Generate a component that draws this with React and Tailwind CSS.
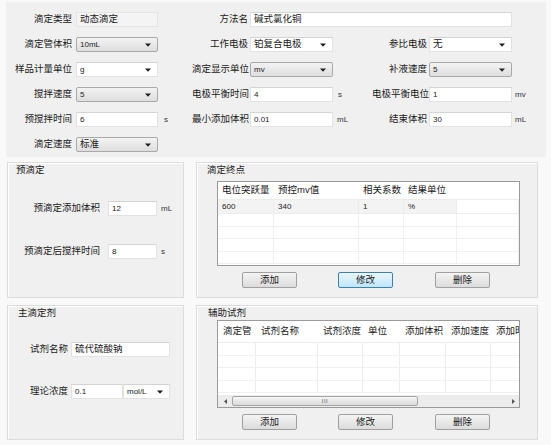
import React from 'react';

const Arrow = () => (
  <svg width="6" height="4" viewBox="0 0 6 4" className="shrink-0">
    <path d="M0 0.5h6L3 3.8z" fill="#1f1f1f" />
  </svg>
);

const TextBox = ({ className, value, cn }) => (
  <div className={`h-[15px] bg-white border border-[#e2e2e2] border-t-[#d4d4d4] flex items-center px-[3px] whitespace-nowrap overflow-hidden ${className}`}>
    <span className={cn ? 'text-[9.5px]' : 'text-[8px] text-[#222]'}>{value}</span>
  </div>
);

const ReadBox = ({ className, value }) => (
  <div className={`h-[15px] bg-[#f4f4f4] border border-[#e4e4e4] flex items-center px-[3px] whitespace-nowrap ${className}`}>
    <span className="text-[9.5px]">{value}</span>
  </div>
);

const Combo = ({ className, value, gray, cn }) => (
  <div
    className={`h-[15px] flex items-center justify-between pl-[3px] pr-[6px] whitespace-nowrap ${
      gray
        ? 'bg-gradient-to-b from-[#f3f3f3] to-[#dedede] border border-[#a9a9a9] rounded-[2px]'
        : 'bg-white border border-[#e2e2e2] border-t-[#d4d4d4]'
    } ${className}`}
  >
    <span className={cn ? 'text-[9.5px]' : 'text-[8px] text-[#222]'}>{value}</span>
    <Arrow />
  </div>
);

const Unit = ({ className, children }) => (
  <div className={`text-[8px] text-[#333] whitespace-nowrap ${className}`}>{children}</div>
);

const Lbl = ({ className, children }) => (
  <div className={`text-[9.5px] text-right whitespace-nowrap ${className}`}>{children}</div>
);

const Btn = ({ children, active, className }) => (
  <div
    className={`w-[55px] h-[16px] flex items-center justify-center text-[9.5px] rounded-[2px] border ${
      active
        ? 'border-[#3c7fb1] bg-gradient-to-b from-[#eaf6fd] to-[#bee6fd]'
        : 'border-[#a0a0a0] bg-gradient-to-b from-[#f4f4f4] to-[#dcdcdc]'
    } ${className}`}
  >
    {children}
  </div>
);

const Group = ({ title, children, titleClass }) => (
  <div className="border border-[#dcdcdc] bg-[#f0f0f0] shadow-[inset_1px_1px_0_#ffffff] flex flex-col">
    <div className={`h-[14px] text-[9.5px] leading-[14px] ${titleClass}`}>{title}</div>
    {children}
  </div>
);

const endpointCols = ['w-[56px]', 'w-[85px]', 'w-[45px]', 'w-[53px]', 'flex-1'];
const endpointHead = ['电位突跃量', '预控mv值', '相关系数', '结果单位', ''];
const endpointRow = ['600', '340', '1', '%', ''];

const reagentCols = ['w-[38px]', 'w-[62px]', 'w-[45px]', 'w-[37px]', 'w-[46px]', 'w-[45px]', 'w-[40px]'];
const reagentHead = ['滴定管', '试剂名称', '试剂浓度', '单位', '添加体积', '添加速度', '添加时间'];

export default function App() {
  return (
    <div className="w-[551px] h-[445px] overflow-hidden bg-[#f9f9f9] pt-[2px] pl-[6px] text-[#1a1a1a] font-['Liberation_Sans','Noto_Sans_CJK_SC',sans-serif]">
      {/* top parameters */}
      <div className="w-[540px] h-[155px] bg-[#f0f0f0] pt-[10px] flex flex-col gap-[10px]">
        <div className="flex items-center h-[15px]">
          <Lbl className="w-[66px]">滴定类型</Lbl>
          <ReadBox className="ml-[4px] w-[82px]" value="动态滴定" />
          <div className="w-[34px]" />
          <Lbl className="w-[56px]">方法名</Lbl>
          <TextBox className="ml-[2px] w-[262px]" value="碱式氯化铜" cn />
        </div>
        <div className="flex items-center h-[15px]">
          <Lbl className="w-[66px]">滴定管体积</Lbl>
          <Combo className="ml-[4px] w-[82px]" value="10mL" gray />
          <div className="w-[34px]" />
          <Lbl className="w-[56px]">工作电极</Lbl>
          <Combo className="ml-[2px] w-[83px]" value="铂复合电极" cn />
          <div className="w-[39px]" />
          <Lbl className="w-[55px]">参比电极</Lbl>
          <Combo className="ml-[2px] w-[83px]" value="无" cn />
        </div>
        <div className="flex items-center h-[15px]">
          <Lbl className="w-[66px]">样品计量单位</Lbl>
          <Combo className="ml-[4px] w-[82px]" value="g" />
          <div className="w-[34px]" />
          <Lbl className="w-[56px]">滴定显示单位</Lbl>
          <Combo className="ml-[2px] w-[83px]" value="mv" gray />
          <div className="w-[39px]" />
          <Lbl className="w-[55px]">补液速度</Lbl>
          <Combo className="ml-[2px] w-[83px]" value="5" gray />
        </div>
        <div className="flex items-center h-[15px]">
          <Lbl className="w-[66px]">搅拌速度</Lbl>
          <Combo className="ml-[4px] w-[82px]" value="5" gray />
          <div className="w-[34px]" />
          <Lbl className="w-[56px]">电极平衡时间</Lbl>
          <TextBox className="ml-[2px] w-[83px]" value="4" />
          <Unit className="w-[39px] pl-[5px]">s</Unit>
          <Lbl className="w-[55px]">电极平衡电位</Lbl>
          <TextBox className="ml-[2px] w-[83px]" value="1" />
          <Unit className="pl-[3px]">mv</Unit>
        </div>
        <div className="flex items-center h-[15px]">
          <Lbl className="w-[66px]">预搅拌时间</Lbl>
          <TextBox className="ml-[4px] w-[82px]" value="6" />
          <Unit className="w-[34px] pl-[6px]">s</Unit>
          <Lbl className="w-[56px]">最小添加体积</Lbl>
          <TextBox className="ml-[2px] w-[83px]" value="0.01" />
          <Unit className="w-[39px] pl-[4px]">mL</Unit>
          <Lbl className="w-[55px]">结束体积</Lbl>
          <TextBox className="ml-[2px] w-[83px]" value="30" />
          <Unit className="pl-[3px]">mL</Unit>
        </div>
        <div className="flex items-center h-[15px]">
          <Lbl className="w-[66px]">滴定速度</Lbl>
          <Combo className="ml-[4px] w-[82px]" value="标准" gray cn />
        </div>
      </div>

      {/* group boxes */}
      <div className="mt-[5px] ml-[1px] grid grid-cols-[177px_342px] grid-rows-[136px_135px] gap-x-[12px] gap-y-[7px]">
        <Group title="预滴定" titleClass="pl-[8px]">
          <div className="flex items-center mt-[24px]">
            <Lbl className="w-[92px]">预滴定添加体积</Lbl>
            <TextBox className="ml-[8px] w-[49px]" value="12" />
            <Unit className="pl-[4px]">mL</Unit>
          </div>
          <div className="flex items-center mt-[28px]">
            <Lbl className="w-[92px]">预滴定后搅拌时间</Lbl>
            <TextBox className="ml-[8px] w-[49px]" value="8" />
            <Unit className="pl-[4px]">s</Unit>
          </div>
        </Group>

        <Group title="滴定终点" titleClass="pl-[10px]">
          <div className="ml-[20px] mt-[4px] w-[303px] h-[85px] bg-white border border-[#9a9a9a] flex flex-col">
            <div className="flex h-[18px] items-center border-b border-[#ececec]">
              {endpointHead.map((h, i) => (
                <div key={i} className={`${endpointCols[i]} h-full flex items-center pl-[4px] text-[9.5px] whitespace-nowrap`}>{h}</div>
              ))}
            </div>
            <div className="flex h-[14px] border-b border-[#ececec]">
              {endpointRow.map((v, i) => (
                <div key={i} className={`${endpointCols[i]} h-full flex items-center pl-[4px] text-[8px] ${i < 4 ? 'bg-[#f3f3f3]' : ''} border-r border-[#ececec]`}>{v}</div>
              ))}
            </div>
            {[0, 1, 2, 3].map((r) => (
              <div key={r} className="flex h-[12.5px] border-b border-[#f0f0f0]">
                {endpointCols.map((c, i) => (
                  <div key={i} className={`${c} h-full border-r border-[#f0f0f0]`} />
                ))}
              </div>
            ))}
          </div>
          <div className="flex mt-[6px]">
            <Btn className="ml-[45px]">添加</Btn>
            <Btn className="ml-[41px]" active>修改</Btn>
            <Btn className="ml-[42px]">删除</Btn>
          </div>
        </Group>

        <Group title="主滴定剂" titleClass="pl-[10px]">
          <div className="flex items-center mt-[22px]">
            <Lbl className="w-[60px]">试剂名称</Lbl>
            <TextBox className="ml-[3px] w-[99px]" value="硫代硫酸钠" cn />
          </div>
          <div className="flex items-center mt-[27px]">
            <Lbl className="w-[60px]">理论浓度</Lbl>
            <TextBox className="ml-[3px] w-[52px]" value="0.1" />
            <Combo className="w-[47px]" value="mol/L" />
          </div>
        </Group>

        <Group title="辅助试剂" titleClass="pl-[11px]">
          <div className="ml-[20px] w-[303px] h-[88px] bg-white border border-[#9a9a9a] flex flex-col overflow-hidden">
            <div className="flex h-[22px] items-center border-b border-[#ececec]">
              {reagentHead.map((h, i) => (
                <div key={i} className={`${reagentCols[i]} shrink-0 h-full flex items-center pl-[5px] text-[9.5px] whitespace-nowrap overflow-hidden`}>{h}</div>
              ))}
            </div>
            {[0, 1, 2, 3].map((r) => (
              <div key={r} className="flex h-[12.5px] border-b border-[#f0f0f0]">
                {reagentCols.map((c, i) => (
                  <div key={i} className={`${c} shrink-0 h-full border-r border-[#ececec]`} />
                ))}
              </div>
            ))}
            <div className="mt-auto h-[12px] bg-[#ececec] flex items-center">
              <div className="w-[14px] flex justify-center">
                <svg width="3" height="5" viewBox="0 0 3 5"><path d="M3 0v5L0 2.5z" fill="#555" /></svg>
              </div>
              <div className="w-[186px] h-[10px] border border-[#a5a5a5] rounded-[2px] bg-gradient-to-b from-[#f6f6f6] to-[#dadada] flex items-center justify-center">
                <span className="text-[6px] leading-none text-[#666] tracking-[0.5px]">III</span>
              </div>
              <div className="flex-1" />
              <div className="w-[12px] flex justify-center">
                <svg width="3" height="5" viewBox="0 0 3 5"><path d="M0 0v5L3 2.5z" fill="#555" /></svg>
              </div>
            </div>
          </div>
          <div className="flex mt-[6px]">
            <Btn className="ml-[45px]">添加</Btn>
            <Btn className="ml-[41px]">修改</Btn>
            <Btn className="ml-[42px]">删除</Btn>
          </div>
        </Group>
      </div>
    </div>
  );
}
